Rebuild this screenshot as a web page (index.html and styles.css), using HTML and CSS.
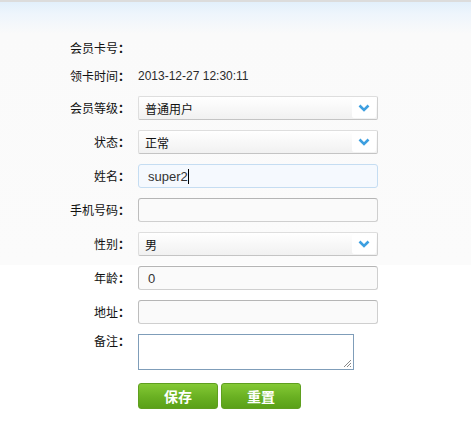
FILE: index.html
```html
<!DOCTYPE html>
<html lang="zh">
<head>
<meta charset="utf-8">
<title>会员信息</title>
<link rel="stylesheet" href="styles.css">
</head>
<body>
<form class="form">
  <div class="row info">
    <label class="lbl">会员卡号<span class="colon">：</span></label>
    <span class="val"></span>
  </div>
  <div class="row info info2">
    <label class="lbl">领卡时间<span class="colon">：</span></label>
    <span class="val">2013-12-27 12:30:11</span>
  </div>
  <div class="row">
    <label class="lbl">会员等级<span class="colon">：</span></label>
    <div class="select"><span>普通用户</span><i class="arrow"><svg width="12" height="8" viewBox="0 0 12 8"><path d="M1.5 1.5 L6 6 L10.5 1.5" fill="none" stroke="#3d9fe0" stroke-width="2.6"/></svg></i></div>
  </div>
  <div class="row">
    <label class="lbl">状态<span class="colon">：</span></label>
    <div class="select"><span>正常</span><i class="arrow"><svg width="12" height="8" viewBox="0 0 12 8"><path d="M1.5 1.5 L6 6 L10.5 1.5" fill="none" stroke="#3d9fe0" stroke-width="2.6"/></svg></i></div>
  </div>
  <div class="row">
    <label class="lbl">姓名<span class="colon">：</span></label>
    <div class="input focus"><span>super2</span><span class="caret"></span></div>
  </div>
  <div class="row">
    <label class="lbl">手机号码<span class="colon">：</span></label>
    <div class="input"></div>
  </div>
  <div class="row">
    <label class="lbl">性别<span class="colon">：</span></label>
    <div class="select"><span>男</span><i class="arrow"><svg width="12" height="8" viewBox="0 0 12 8"><path d="M1.5 1.5 L6 6 L10.5 1.5" fill="none" stroke="#3d9fe0" stroke-width="2.6"/></svg></i></div>
  </div>
  <div class="row">
    <label class="lbl">年龄<span class="colon">：</span></label>
    <div class="input"><span>0</span></div>
  </div>
  <div class="row">
    <label class="lbl">地址<span class="colon">：</span></label>
    <div class="input"></div>
  </div>
  <div class="row area-row">
    <label class="lbl">备注<span class="colon">：</span></label>
    <div class="area"><svg class="grip" width="9" height="9" viewBox="0 0 9 9"><path d="M8 1 L1 8 M8 4 L4 8 M8 7 L7 8" stroke="#888" stroke-width="1"/></svg></div>
  </div>
  <div class="row btns">
    <span class="lbl"></span>
    <div class="actions">
      <button type="button" class="btn">保存</button>
      <button type="button" class="btn">重置</button>
    </div>
  </div>
</form>
</body>
</html>
```

FILE: styles.css
```css
html, body {
  margin: 0;
  padding: 0;
}
body {
  width: 471px;
  height: 439px;
  overflow: hidden;
  font-family: "Noto Sans CJK SC", "Liberation Sans", sans-serif;
  font-size: 12px;
  color: #000;
  background: linear-gradient(to bottom, #dcdcdc 0, #dcdcdc 2px, #e2effb 2px, #eef5fc 14px, #fafafa 34px, #fbfbfb 265px, #ffffff 265px);
}
.form {
  padding-top: 39px;
}
.row {
  display: flex;
  align-items: center;
  height: 24px;
  margin-bottom: 10px;
}
.info {
  height: 18px;
}
.info2 {
  margin-bottom: 11px;
}
.lbl {
  width: 130px;
  flex: none;
  text-align: right;
  margin-right: 8px;
  font-size: 12px;
  line-height: 18px;
  color: #111;
}
.colon {
  font-family: "Noto Sans CJK TC", "Noto Sans CJK SC", sans-serif;
  font-weight: bold;
}
.val {
  font-family: "Liberation Sans", sans-serif;
  font-size: 12px;
  color: #2b2b2b;
}
.select {
  box-sizing: border-box;
  width: 240px;
  height: 24px;
  border: 1px solid #dedede;
  border-bottom-color: #c4c4c4;
  border-right-color: #d0d0d0;
  border-radius: 2px;
  background: linear-gradient(to bottom, #ffffff, #f1f1f1);
  display: flex;
  align-items: center;
  justify-content: space-between;
  padding-left: 6px;
  padding-right: 1px;
  font-size: 12px;
  color: #111;
}
.arrow {
  width: 24px;
  height: 20px;
  background: #fff;
  border-radius: 2px;
  display: flex;
  align-items: center;
  justify-content: center;
}
.input {
  box-sizing: border-box;
  width: 240px;
  height: 24px;
  border: 1px solid #cfcfcf;
  border-top-color: #b5b5b5;
  border-left-color: #bdbdbd;
  border-radius: 3px;
  background: #fafafa;
  display: flex;
  align-items: center;
  padding-left: 9px;
  font-family: "Liberation Sans", sans-serif;
  font-size: 13px;
  color: #333;
}
.input.focus {
  border-color: #c5ddf2;
  background: #f5f9fe;
  color: #333;
}
.caret {
  display: inline-block;
  width: 1px;
  height: 15px;
  background: #000;
}
.area-row {
  align-items: flex-start;
  height: auto;
  margin-top: 2px;
  margin-bottom: 13px;
}
.area-row .lbl {
  line-height: 14px;
}
.area {
  box-sizing: border-box;
  position: relative;
  width: 216px;
  height: 36px;
  border: 1px solid #7f9db9;
  background: #fff;
}
.grip {
  position: absolute;
  right: 1px;
  bottom: 1px;
}
.btns {
  height: 26px;
}
.actions {
  display: flex;
  gap: 3px;
}
.btn {
  box-sizing: border-box;
  width: 80px;
  height: 26px;
  border: 1px solid #5f9f1f;
  border-radius: 3px;
  background: linear-gradient(to bottom, #84c935, #69b022 55%, #5aa018);
  color: #fff;
  font-family: "Noto Sans CJK SC", sans-serif;
  font-size: 14px;
  font-weight: bold;
  padding: 0;
  line-height: 24px;
}
```
